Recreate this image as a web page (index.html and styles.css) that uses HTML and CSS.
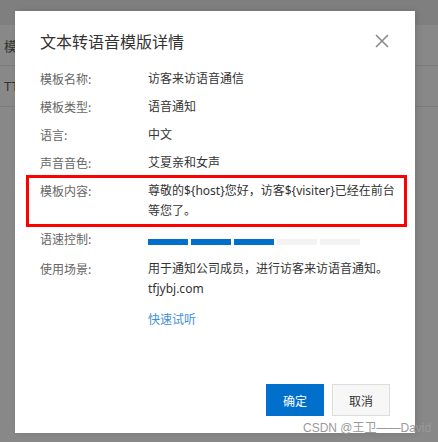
FILE: index.html
```
<!DOCTYPE html>
<html lang="zh-CN">
<head>
<meta charset="utf-8">
<title>文本转语音模版详情</title>
<link rel="stylesheet" href="styles.css">
</head>
<body>
<div class="page">
  <div class="page-head"></div>
  <div class="page-row"><span class="page-cell">模板名称</span></div>
  <div class="page-row"><span class="page-cell">TTS_0001</span></div>
</div>

<div class="modal">
  <div class="modal-header">
    <div class="modal-title">文本转语音模版详情</div>
    <svg class="close" width="14" height="14" viewBox="0 0 14 14"><path d="M1 1 L13 13 M13 1 L1 13" stroke="#8a8a8a" stroke-width="1.6" fill="none"/></svg>
  </div>
  <div class="modal-body">
    <div class="row"><div class="label">模板名称:</div><div class="value">访客来访语音通信</div></div>
    <div class="row"><div class="label">模板类型:</div><div class="value">语音通知</div></div>
    <div class="row"><div class="label">语言:</div><div class="value">中文</div></div>
    <div class="row"><div class="label">声音音色:</div><div class="value">艾夏亲和女声</div></div>
    <div class="row row-hl"><div class="label">模板内容:</div><div class="value"><span class="nowrap">尊敬的${host}您好，访客${visiter}已经在前台</span><br>等您了。</div></div>
    <div class="row row-speed"><div class="label">语速控制:</div><div class="value"><div class="bars"><span class="bar on"></span><span class="bar on"></span><span class="bar on"></span><span class="bar"></span><span class="bar"></span></div></div></div>
    <div class="row"><div class="label">使用场景:</div><div class="value">用于通知公司成员，进行访客来访语音通知。tfjybj.com</div></div>
    <div class="row row-link"><div class="label"></div><div class="value"><a class="link">快速试听</a></div></div>
  </div>
  <div class="modal-footer">
    <button class="btn btn-primary">确定</button>
    <button class="btn btn-default">取消</button>
  </div>
</div>

<div class="watermark">CSDN @王卫——David</div>
</body>
</html>
```

FILE: styles.css
```
html, body {
  margin: 0;
  padding: 0;
}
body {
  width: 438px;
  height: 442px;
  overflow: hidden;
  background: #888888;
  font-family: "Noto Sans", "Noto Sans CJK SC", sans-serif;
  font-size: 12px;
  position: relative;
}
.page-head {
  height: 25px;
  background: #7f7f7f;
}
.page-row {
  height: 40px;
  border-bottom: 1px solid #7b7b7b;
  display: flex;
  align-items: center;
  padding-left: 4px;
  color: #333;
  font-size: 13px;
}
.page-cell {
  display: block;
  width: 11px;
  overflow: hidden;
  white-space: nowrap;
}
.modal {
  position: absolute;
  left: 15px;
  top: 11px;
  width: 400px;
  height: 422px;
  box-sizing: border-box;
  background: #fff;
  padding: 0 25px 17px;
  display: flex;
  flex-direction: column;
  box-shadow: 2px 0 6px rgba(0,0,0,0.12);
}
.modal-header {
  padding-top: 18px;
  display: flex;
  justify-content: space-between;
  align-items: center;
}
.modal-title {
  font-size: 16px;
  line-height: 24px;
  color: #333;
  font-family: "Noto Sans CJK SC", sans-serif;
}
.close {
  display: block;
  margin-right: 1px;
}
.modal-body {
  margin-top: 12px;
}
.row {
  display: flex;
  padding: 4px 0;
  line-height: 20px;
}
.label {
  width: 108px;
  flex: none;
  color: #666;
  font-family: "Noto Sans CJK SC", sans-serif;
}
.value {
  flex: 1;
  color: #333;
  word-break: normal;
}
.nowrap {
  white-space: nowrap;
}
.row-hl {
  border: 3px solid #f00;
  margin: -2px -17px -2px -14px;
  padding: 3px 14px 3px 11px;
}
.row-speed {
  height: 22px;
}
.bars {
  display: flex;
  gap: 3px;
  padding-top: 10px;
}
.bar {
  width: 40px;
  height: 6px;
  background: #f3f3f3;
}
.bar.on {
  background: #0070cc;
}
.row-link {
  margin-top: 2px;
}
.link {
  color: #3d8fd9;
  font-family: "Noto Sans CJK SC", sans-serif;
}
.modal-footer {
  margin-top: auto;
  display: flex;
  justify-content: flex-end;
  gap: 8px;
}
.btn {
  width: 58px;
  height: 32px;
  font-size: 12px;
  font-family: "Noto Sans CJK SC", sans-serif;
  padding: 0;
  cursor: pointer;
  box-sizing: border-box;
}
.btn-primary {
  background: #0070cc;
  border: none;
  color: #fff;
}
.btn-default {
  background: #f7f7f7;
  border: 1px solid #dddddd;
  color: #333;
}
.watermark {
  position: absolute;
  left: 303px;
  top: 420px;
  font-family: "Liberation Sans", "Noto Sans CJK SC", sans-serif;
  font-size: 12px;
  line-height: 16px;
  color: #9a9a9a;
  white-space: nowrap;
}
```
